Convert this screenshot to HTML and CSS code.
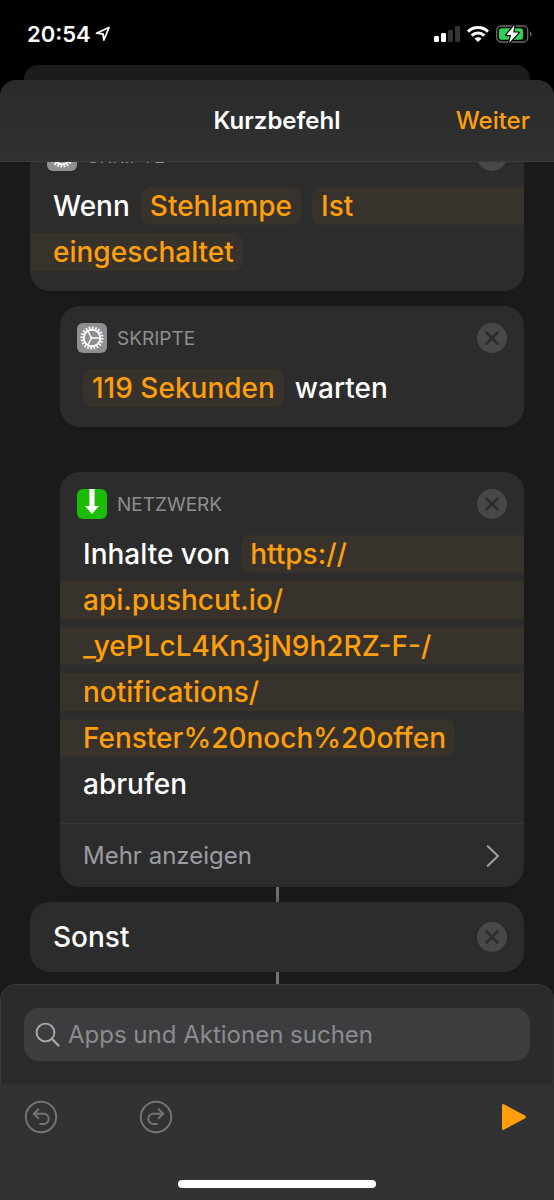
FILE: index.html
```html
<!DOCTYPE html>
<html lang="de">
<head>
<meta charset="utf-8">
<meta name="viewport" content="width=device-width, initial-scale=1">
<title>Kurzbefehl</title>
<link rel="stylesheet" href="styles.css">
</head>
<body>
<svg class="defs" aria-hidden="true">
  <symbol id="gear" viewBox="0 0 30 30">
    <circle cx="15" cy="15" r="10.3" fill="none" stroke="#fff" stroke-width="2.6" pathLength="40" stroke-dasharray="1 1"/>
    <circle cx="15" cy="15" r="8.3" fill="none" stroke="#fff" stroke-width="1.9"/>
    <path d="M14.5 15H23M14.5 15L10.7 7.7M14.5 15L10.7 22.3" fill="none" stroke="#fff" stroke-width="1.4"/>
    <circle cx="14.6" cy="15" r="1.3" fill="#fff"/>
  </symbol>
  <symbol id="close" viewBox="0 0 30 30">
    <circle cx="15" cy="15" r="15" fill="#484848"/>
    <path d="M9.5 9.5L20.5 20.5M20.5 9.5L9.5 20.5" fill="none" stroke="#2c2c2c" stroke-width="2.6" stroke-linecap="round"/>
  </symbol>
</svg>

<div class="status">
  <div class="status-time"><time>20:54</time>
    <svg width="16" height="16" viewBox="0 0 16 16" aria-hidden="true"><path d="M1.5 7.2L14 1.5L8.9 14L8 8Z" fill="none" stroke="#fff" stroke-width="1.8" stroke-linejoin="round"/></svg>
  </div>
  <div class="status-icons">
    <svg width="26" height="16" viewBox="0 0 26 16" aria-hidden="true"><rect y="10" width="5" height="6" rx="1.2" fill="#fff"/><rect x="7" y="7" width="5" height="9" rx="1.2" fill="#fff"/><rect x="14" y="4" width="5" height="12" rx="1.2" fill="#343434"/><rect x="21" width="5" height="16" rx="1.2" fill="#343434"/></svg>
    <svg width="22" height="16" viewBox="0 0 22 16" aria-hidden="true"><g fill="none" stroke="#fff" stroke-width="2.9"><path d="M1 5.6A14.4 14.4 0 0 1 21 5.6"/><path d="M4.7 9.6A9 9 0 0 1 17.3 9.6"/></g><path d="M7.4 12.6A5.2 5.2 0 0 1 14.6 12.6L11 16Z" fill="#fff"/></svg>
    <svg width="36" height="20" viewBox="0 0 36 20" aria-hidden="true"><rect x=".7" y="2" width="31" height="16" rx="4.6" fill="none" stroke="#6a6a6a" stroke-width="1.3"/><rect x="3" y="4.3" width="24" height="11.4" rx="2.6" fill="#30d158"/><path d="M34 7.5C36.2 8.2 36.2 11.8 34 12.5Z" fill="#6a6a6a"/><path d="M18.6 1L10.3 11H15.1L13.1 19L22.5 8.6H17.2Z" fill="#fff" stroke="#000" stroke-width="2.4" stroke-linejoin="round" paint-order="stroke"/></svg>
  </div>
</div>

<div class="back-sheet"></div>

<header class="navbar">
  <h1 class="navbar-title">Kurzbefehl</h1>
  <button class="navbar-next" type="button">Weiter</button>
</header>

<main class="editor">
  <div class="flow">
    <section class="card">
      <div class="card-head">
        <span class="badge"><svg class="icon" aria-hidden="true"><use href="#gear"/></svg></span>
        <h2 class="card-label">SKRIPTE</h2>
        <button class="close" type="button" aria-label="Entfernen"><svg class="icon" aria-hidden="true"><use href="#close"/></svg></button>
      </div>
      <div class="lines">
        <div class="line"><span>Wenn</span><button class="token" type="button">Stehlampe</button><span class="token token-start">Ist</span></div>
        <div class="line"><span class="token token-end">eingeschaltet</span></div>
      </div>
    </section>

    <section class="card card-nested">
      <div class="card-head">
        <span class="badge"><svg class="icon" aria-hidden="true"><use href="#gear"/></svg></span>
        <h2 class="card-label">SKRIPTE</h2>
        <button class="close" type="button" aria-label="Entfernen"><svg class="icon" aria-hidden="true"><use href="#close"/></svg></button>
      </div>
      <div class="lines">
        <div class="line"><button class="token" type="button">119 Sekunden</button><span>warten</span></div>
      </div>
    </section>

    <section class="card card-nested card-apart">
      <div class="card-head">
        <span class="badge badge-green"><svg class="icon" viewBox="0 0 30 30" aria-hidden="true"><path d="M12.4 0H17.6V17H22L15 25L8 17H12.4Z" fill="#fff"/></svg></span>
        <h2 class="card-label">NETZWERK</h2>
        <button class="close" type="button" aria-label="Entfernen"><svg class="icon" aria-hidden="true"><use href="#close"/></svg></button>
      </div>
      <div class="lines">
        <div class="line"><span>Inhalte von</span><span class="token token-start">https://</span></div>
        <div class="line"><span class="token token-mid">api.pushcut.io/</span></div>
        <div class="line"><span class="token token-mid">_yePLcL4Kn3jN9h2RZ-F-/</span></div>
        <div class="line"><span class="token token-mid">notifications/</span></div>
        <div class="line"><span class="token token-end">Fenster%20noch%20offen</span></div>
        <div class="line"><span>abrufen</span></div>
      </div>
      <button class="more" type="button"><span>Mehr anzeigen</span>
        <svg width="14" height="24" viewBox="0 0 14 24" aria-hidden="true"><path d="M1.8 2.2L12 12L1.8 21.8" fill="none" stroke="#a0a0a7" stroke-width="2" stroke-linecap="round" stroke-linejoin="round"/></svg>
      </button>
    </section>

    <div class="connector"></div>

    <section class="card card-else">
      <h2 class="else-title">Sonst</h2>
      <button class="close" type="button" aria-label="Entfernen"><svg class="icon" aria-hidden="true"><use href="#close"/></svg></button>
    </section>

    <div class="connector connector-last"></div>
  </div>
</main>

<div class="search-dock">
  <div class="search-panel">
    <label class="search">
      <svg width="26" height="26" viewBox="0 0 26 26" aria-hidden="true"><circle cx="10.5" cy="10.5" r="8.9" fill="none" stroke="#a9a9b2" stroke-width="1.9"/><path d="M17 17L23.5 23.5" stroke="#a9a9b2" stroke-width="2.3" stroke-linecap="round"/></svg>
      <input class="search-input" type="search" placeholder="Apps und Aktionen suchen" aria-label="Apps und Aktionen suchen">
    </label>
  </div>
</div>

<footer class="toolbar">
  <div class="tools">
    <button class="tool" type="button" aria-label="Widerrufen"><svg width="34" height="34" viewBox="0 0 34 34" aria-hidden="true"><g fill="none" stroke="#747472" stroke-width="1.9" stroke-linecap="round" stroke-linejoin="round"><circle cx="17" cy="17" r="15.2"/><path d="M14.4 9.3L9.7 13.7L14.4 18.3M10 13.7H19.6A4.9 4.9 0 0 1 19.6 24H16"/></g></svg></button>
    <button class="tool" type="button" aria-label="Wiederholen"><svg width="34" height="34" viewBox="0 0 34 34" aria-hidden="true"><g fill="none" stroke="#747472" stroke-width="1.9" stroke-linecap="round" stroke-linejoin="round"><circle cx="17" cy="17" r="15.2"/><path d="M19.6 9.3L24.3 13.7L19.6 18.3M24 13.7H14.4A4.9 4.9 0 0 0 14.4 24H18"/></g></svg></button>
    <button class="tool tool-play" type="button" aria-label="Ausführen"><svg width="26" height="28" viewBox="0 0 26 28" aria-hidden="true"><path d="M2.3 2.3V25.7L23.7 14Z" fill="#ff9f0a" stroke="#ff9f0a" stroke-width="2.6" stroke-linejoin="round"/></svg></button>
  </div>
  <div class="home-bar"></div>
</footer>
</body>
</html>
```
FILE: styles.css
```css
* { box-sizing: border-box; }

body {
  margin: 0;
  min-height: 100vh;
  display: flex;
  flex-direction: column;
  background: #000;
  color: #fff;
  font-family: Inter, "Liberation Sans", sans-serif;
  font-size: 28px;
}

h1, h2 { margin: 0; font-weight: 500; }

button {
  margin: 0;
  padding: 0;
  border: 0;
  background: none;
  color: inherit;
  font: inherit;
  cursor: pointer;
}

svg { display: block; flex: none; }

.defs { position: absolute; width: 0; height: 0; }
.icon { width: 30px; height: 30px; }

.status {
  height: 65px;
  padding: 3px 22px 0 27px;
  display: flex;
  align-items: center;
  justify-content: space-between;
}
.status-time {
  display: flex;
  align-items: center;
  gap: 4px;
  font-size: 22px;
  font-weight: 600;
}
.status-icons { display: flex; align-items: center; gap: 7px; }

.back-sheet {
  height: 15px;
  margin: 0 24px;
  border-radius: 14px 14px 0 0;
  background: #1c1c1c;
}

.navbar {
  height: 82px;
  padding: 0 24px;
  display: grid;
  grid-template-columns: 1fr auto 1fr;
  align-items: center;
  border-radius: 16px 16px 0 0;
  border-bottom: 1px solid #3a3a3a;
  background: linear-gradient(#2a2a2a, #303132);
  font-size: 24px;
}
.navbar-title { grid-column: 2; font-size: 24px; font-weight: 600; }
.navbar-next { justify-self: end; color: #ff9f0a; font-weight: 500; }

.editor {
  flex: 1;
  display: flex;
  flex-direction: column;
  overflow: hidden;
  background: #1c1c1c;
}
.flow {
  flex: 1;
  display: flex;
  flex-direction: column;
  margin-top: -38px;
  padding: 0 30px;
}

.card {
  margin-bottom: 15px;
  border-radius: 20px;
  background: #2c2c2c;
  box-shadow: 0 2px 16px #16161a80;
}
.card-nested { margin-left: 30px; }
.card-apart { margin-top: 30px; margin-bottom: 0; }

.card-head {
  padding: 17px 17px 0;
  display: flex;
  align-items: center;
  gap: 10px;
}
.card-label {
  flex: 1;
  color: #8f8f8f;
  font-size: 19px;
  font-weight: 400;
}
.badge {
  border-radius: 6px;
  background: #8e8e93;
}
.badge-green { background: #1cbb04; }

.lines {
  padding: 16px 0 20px;
  display: flex;
  flex-direction: column;
  gap: 8px;
  font-weight: 500;
}
.line {
  padding-left: 23px;
  display: flex;
  gap: 11px;
  line-height: 38px;
}
.token {
  padding: 0 9px;
  border-radius: 10px;
  background: #38322c;
  color: #ff9f0a;
}
.token-start { flex: 1; border-radius: 10px 0 0 10px; }
.token-mid { flex: 1; margin-left: -23px; padding-left: 23px; border-radius: 0; }
.token-end { margin-left: -23px; padding-left: 23px; border-radius: 0 10px 10px 0; }

.more {
  width: 100%;
  height: 64px;
  padding: 0 24px 0 23px;
  display: flex;
  align-items: center;
  justify-content: space-between;
  border-top: 1px solid #363636;
  color: #9c9ca3;
  font-size: 24px;
}

.connector {
  width: 3px;
  height: 15px;
  align-self: center;
  background: #717378;
}
.connector-last { flex: 1; height: auto; min-height: 12px; }

.card-else {
  height: 70px;
  margin-bottom: 0;
  padding: 0 17px 0 23px;
  display: flex;
  align-items: center;
  justify-content: space-between;
}
.else-title { font-size: 28px; }

.search-dock { background: #1a1a1a; }
.search-panel {
  padding: 23px 23px 24px;
  border: 1px solid #383838;
  border-bottom: 0;
  border-radius: 16px 16px 0 0;
  background: #2b2b2b;
}
.search {
  height: 53px;
  padding: 0 11px;
  display: flex;
  align-items: center;
  gap: 7px;
  border-radius: 15px;
  background: #3d3d3f;
}
.search-input {
  flex: 1;
  min-width: 0;
  padding: 0;
  border: 0;
  outline: 0;
  background: none;
  color: #fff;
  font: inherit;
  font-size: 24px;
}
.search-input::placeholder { color: #8c8c8f; opacity: 1; }

.toolbar {
  height: 115px;
  padding: 15px 24px 12px;
  display: flex;
  flex-direction: column;
  justify-content: space-between;
  background: #313233;
}
.tools { display: flex; align-items: center; gap: 81px; }
.tool-play { margin-left: auto; padding-right: 3px; }
.home-bar {
  width: 198px;
  height: 8px;
  align-self: center;
  border-radius: 4px;
  background: #fff;
}
```
